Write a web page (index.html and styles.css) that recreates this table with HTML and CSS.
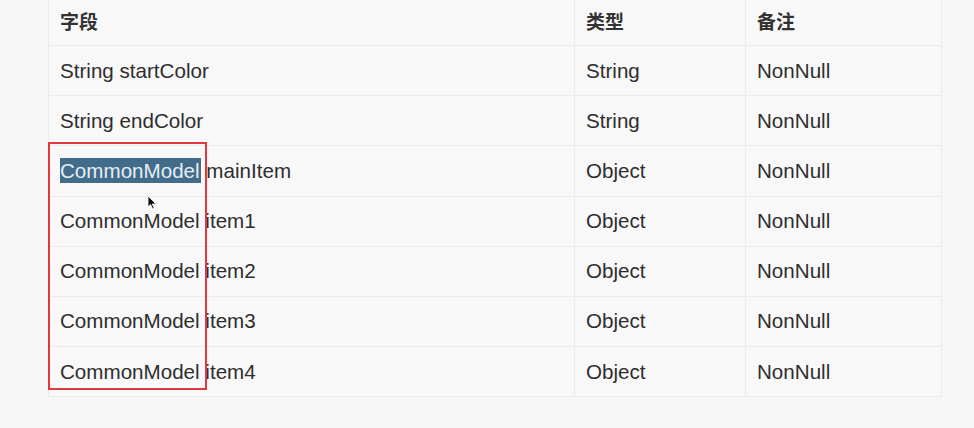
FILE: index.html
```html
<!DOCTYPE html>
<html lang="zh">
<head>
<meta charset="utf-8">
<link rel="stylesheet" href="styles.css">
</head>
<body>
<div class="page">
  <table class="fields">
    <colgroup>
      <col class="c1"><col class="c2"><col class="c3">
    </colgroup>
    <thead>
      <tr><th>字段</th><th>类型</th><th>备注</th></tr>
    </thead>
    <tbody>
      <tr><td>String startColor</td><td>String</td><td>NonNull</td></tr>
      <tr><td>String endColor</td><td>String</td><td>NonNull</td></tr>
      <tr><td><span class="sel">CommonModel</span> mainItem</td><td>Object</td><td>NonNull</td></tr>
      <tr><td>CommonModel item1</td><td>Object</td><td>NonNull</td></tr>
      <tr><td>CommonModel item2</td><td>Object</td><td>NonNull</td></tr>
      <tr><td>CommonModel item3</td><td>Object</td><td>NonNull</td></tr>
      <tr><td>CommonModel item4</td><td>Object</td><td>NonNull</td></tr>
    </tbody>
  </table>
  <div class="mark"></div>
  <svg class="cursor" width="11" height="15" viewBox="0 0 11 15"><path d="M1 1 L1 12 L3.6 9.6 L5.6 14 L7.2 13.3 L5.3 9 L9 9 Z" fill="#111" stroke="#fff" stroke-width="0.8"/></svg>
</div>
</body>
</html>
```

FILE: styles.css
```css
html, body {
  margin: 0;
  padding: 0;
  background: #f7f7f7;
}
.page {
  position: relative;
  width: 974px;
  height: 428px;
  overflow: hidden;
  font-family: "Liberation Sans", Arial, "Noto Sans CJK SC", sans-serif;
  font-size: 20.6px;
  color: #2e2e2e;
}
.fields {
  margin: -5px 0 0 48px;
  border-collapse: collapse;
  table-layout: fixed;
  width: 893px;
  background: #f8f8f8;
}
.c1 { width: 526px; }
.c2 { width: 171px; }
.c3 { width: 196px; }
.fields th,
.fields td {
  height: 49.15px;
  padding: 0 11px;
  border: 1px solid #ebebeb;
  text-align: left;
  vertical-align: middle;
  white-space: nowrap;
}
.fields th {
  font-weight: bold;
  font-family: "Noto Sans CJK SC", sans-serif;
  font-size: 19px;
  color: #333;
}
.sel {
  background: #426c8a;
  color: #e4eef5;
  padding: 1px 1px 1px 0;
}
.mark {
  position: absolute;
  left: 48px;
  top: 142px;
  width: 155px;
  height: 244px;
  border: 2px solid #e1373d;
}
.cursor {
  position: absolute;
  left: 147px;
  top: 195px;
}
```
